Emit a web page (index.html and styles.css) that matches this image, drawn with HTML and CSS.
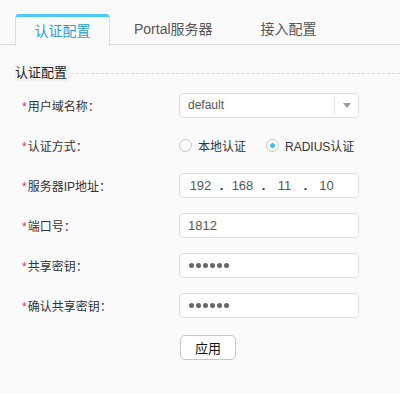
FILE: index.html
```html
<!DOCTYPE html>
<html lang="zh-CN">
<head>
    <meta charset="UTF-8">
    <meta name="viewport" content="width=device-width, initial-scale=1.0">
    <title>认证配置</title>
    <link rel="stylesheet" href="styles.css">
</head>
<body>
    <div class="tabs">
        <div class="tab active">认证配置</div>
        <div class="tab">Portal服务器</div>
        <div class="tab">接入配置</div>
    </div>

    <div class="section-title">
        <span class="title-text">认证配置</span>
        <span class="title-line"></span>
    </div>

    <div class="form">
        <div class="row">
            <label class="label"><span class="req">*</span>用户域名称：</label>
            <div class="select">
                <span class="select-value">default</span>
                <span class="select-btn"><span class="arrow"></span></span>
            </div>
        </div>
        <div class="row">
            <label class="label"><span class="req">*</span>认证方式：</label>
            <div class="radios">
                <label class="radio"><span class="circle"></span>本地认证</label>
                <label class="radio checked"><span class="circle"></span>RADIUS认证</label>
            </div>
        </div>
        <div class="row">
            <label class="label"><span class="req">*</span>服务器IP地址：</label>
            <div class="input ip">
                <span class="seg">192</span><span class="dot">.</span>
                <span class="seg">168</span><span class="dot">.</span>
                <span class="seg">11</span><span class="dot">.</span>
                <span class="seg">10</span>
            </div>
        </div>
        <div class="row">
            <label class="label"><span class="req">*</span>端口号：</label>
            <div class="input">1812</div>
        </div>
        <div class="row">
            <label class="label"><span class="req">*</span>共享密钥：</label>
            <div class="input pwd">
                <span></span><span></span><span></span><span></span><span></span><span></span>
            </div>
        </div>
        <div class="row">
            <label class="label"><span class="req">*</span>确认共享密钥：</label>
            <div class="input pwd">
                <span></span><span></span><span></span><span></span><span></span><span></span>
            </div>
        </div>
        <div class="actions">
            <button class="btn">应用</button>
        </div>
    </div>
</body>
</html>
```

FILE: styles.css
```css
body {
    margin: 0;
    background-color: #fafafa;
    font-family: "Liberation Sans", "Noto Sans CJK SC", sans-serif;
    font-size: 12px;
    color: #333;
}
.tabs {
    display: flex;
    padding: 14px 0 0 15px;
    height: 30px;
    border-bottom: 1px solid #dcdcdc;
}
.tab {
    padding: 0 24px;
    line-height: 30px;
    font-size: 14px;
    color: #555;
}
.tab.active {
    width: 93px;
    padding: 0;
    text-align: center;
    color: #2a9fd8;
    background-color: #fafafa;
    border: 1px solid #dcdcdc;
    border-top: 3px solid #4cc8fa;
    border-bottom: none;
    border-radius: 4px 4px 0 0;
    line-height: 28px;
    height: 28px;
    margin-bottom: -1px;
    padding-bottom: 1px;
}
.section-title {
    display: flex;
    align-items: center;
    margin: 19px 0 0 15px;
}
.title-text {
    background-color: #f3f3f3;
    font-size: 13px;
    line-height: 18px;
    padding-right: 2px;
    color: #222;
}
.title-line {
    flex: 1;
    border-top: 1px dashed #d8d8d8;
    margin-left: 2px;
}
.form {
    margin-top: 3px;
}
.row {
    display: flex;
    align-items: center;
    height: 40px;
}
.label {
    width: 157px;
    padding-left: 22px;
    font-size: 12px;
    color: #333;
}
.req {
    color: #e0315a;
    margin-right: 1px;
}
.input, .select {
    box-sizing: border-box;
    width: 180px;
    height: 25px;
    background-color: #fff;
    border: 1px solid #dedede;
    border-radius: 4px;
    color: #555;
    font-size: 12px;
    line-height: 23px;
    padding-left: 8px;
}
.select {
    display: flex;
    padding-right: 0;
}
.select-value {
    flex: 1;
}
.select-btn {
    width: 23px;
    margin: 2px 0;
    border-left: 1px solid #e2e2e2;
    display: flex;
    align-items: center;
    justify-content: center;
}
.arrow {
    width: 0;
    height: 0;
    border-left: 4px solid transparent;
    border-right: 4px solid transparent;
    border-top: 5px solid #999;
}
.radios {
    display: flex;
    gap: 20px;
}
.radio {
    display: flex;
    align-items: center;
    color: #333;
}
.circle {
    box-sizing: border-box;
    width: 13px;
    height: 13px;
    border: 1px solid #c4c4c4;
    border-radius: 50%;
    background-color: #fff;
    margin-right: 6px;
    display: flex;
    align-items: center;
    justify-content: center;
}
.radio.checked .circle::after {
    content: "";
    width: 5px;
    height: 5px;
    border-radius: 50%;
    background-color: #3cbff5;
}
.ip {
    display: flex;
    padding-left: 6px;
    font-size: 13px;
}
.seg {
    width: 29px;
    text-align: center;
}
.dot {
    width: 13px;
    text-align: center;
    font-weight: bold;
    color: #333;
}
.pwd {
    display: flex;
    align-items: center;
    gap: 2px;
    padding-left: 9px;
}
.pwd span {
    width: 5px;
    height: 5px;
    border-radius: 50%;
    background-color: #666;
}
.input:not(.ip):not(.pwd) {
    font-size: 13px;
}
.actions {
    padding: 10px 0 0 180px;
}
.btn {
    width: 56px;
    height: 25px;
    background-color: #fff;
    border: 1px solid #c6c6c6;
    border-radius: 5px;
    font-family: "Liberation Sans", "Noto Sans CJK SC", sans-serif;
    font-size: 13px;
    color: #111;
    cursor: pointer;
}
```
